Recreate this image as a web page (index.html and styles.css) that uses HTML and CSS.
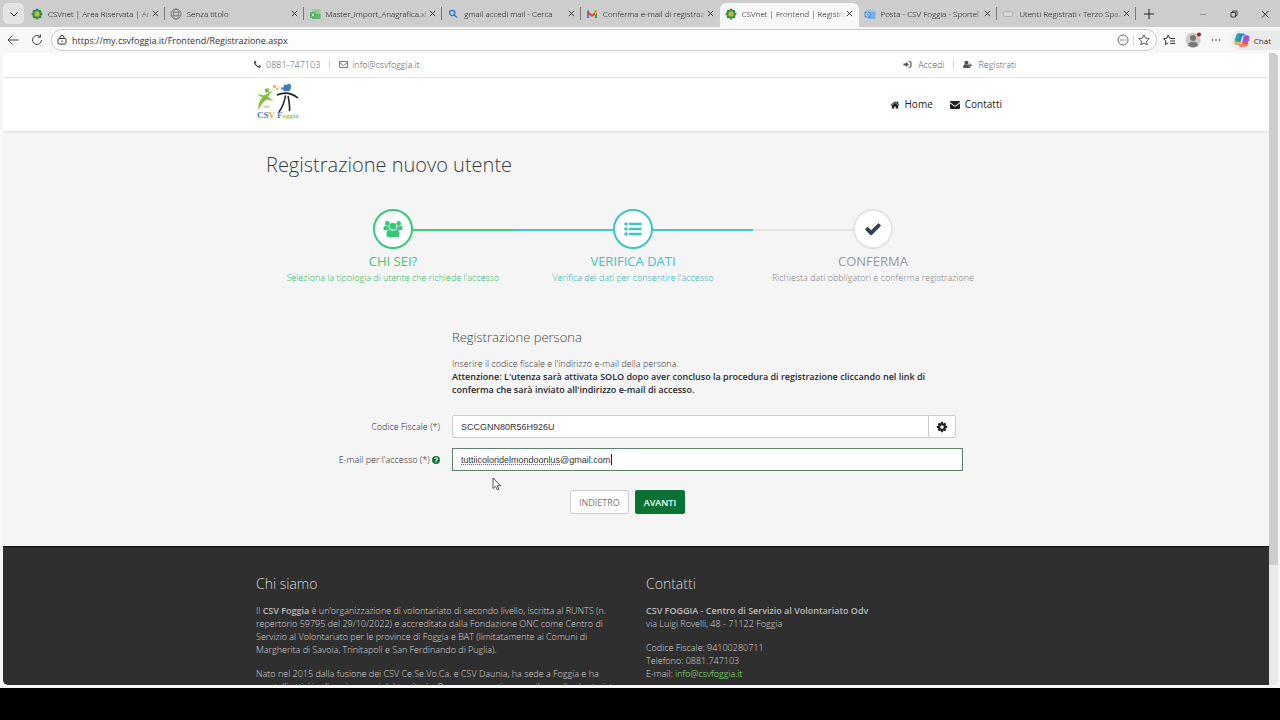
FILE: index.html
```html
<!DOCTYPE html>
<html lang="it">
<head>
<meta charset="utf-8">
<title>CSVnet | Frontend | Registrazione</title>
<link rel="stylesheet" href="styles.css">
</head>
<body>
<svg class="defs" aria-hidden="true">
  <symbol id="close" viewBox="0 0 8 8"><path d="M1 1l6 6M7 1l-6 6" fill="none" stroke="#222"/></symbol>
  <symbol id="flower" viewBox="0 0 12 12">
    <g fill="#2c8a43"><circle cx="6" cy="2" r="1.500"/><circle cx="8.800" cy="3.200" r="1.500"/><circle cx="10" cy="6" r="1.500"/><circle cx="8.800" cy="8.800" r="1.500"/><circle cx="6" cy="10" r="1.500"/><circle cx="3.200" cy="8.800" r="1.500"/><circle cx="2" cy="6" r="1.500"/><circle cx="3.200" cy="3.200" r="1.500"/><circle cx="6" cy="6" r="3.800"/></g>
    <circle cx="6" cy="6" r="2.700" fill="#a5c64a"/><circle cx="6" cy="6" r="1.500" fill="#e0a63c"/>
  </symbol>
</svg>
<div class="browser">
  <div class="tabstrip">
    <button class="tab-menu" aria-label="Menu schede"><svg width="10" height="10" viewBox="0 0 10 10"><path d="M1.500 3.500l3.500 3.500 3.500-3.500" fill="none" stroke="#222"/></svg></button>
    <div class="tabs">
      <div class="tab"><svg class="fav"><use href="#flower"/></svg><span class="tab-title">CSVnet | Area Riservata | Ana</span><button class="close" aria-label="Chiudi"><svg><use href="#close"/></svg></button></div>
      <div class="tab"><svg class="fav" viewBox="0 0 12 12"><g fill="none" stroke="#777" stroke-width=".9"><circle cx="6" cy="6" r="5"/><ellipse cx="6" cy="6" rx="2.300" ry="5"/><path d="M1.500 4.200h9M1.500 7.800h9"/></g></svg><span class="tab-title">Senza titolo</span><button class="close" aria-label="Chiudi"><svg><use href="#close"/></svg></button></div>
      <div class="tab"><svg class="fav" viewBox="0 0 12 12"><rect x="3" y="1" width="8.500" height="10" rx="1" fill="#8fd08f"/><path d="M3 6h8.500v4a1 1 0 0 1-1 1H4a1 1 0 0 1-1-1z" fill="#5fb56b"/><rect x="1" y="4" width="6" height="6" rx="1" fill="#57a866"/><path d="M2.700 5.500l2.600 3M5.300 5.500l-2.600 3" stroke="#e7f6e7" stroke-width=".8"/></svg><span class="tab-title">Master_Import_Anagrafica.xl</span><button class="close" aria-label="Chiudi"><svg><use href="#close"/></svg></button></div>
      <div class="tab"><svg class="fav" viewBox="0 0 12 12"><g fill="none" stroke="#2479c9" stroke-width="1.400"><circle cx="5.200" cy="5" r="2.600"/><path d="M7.200 7l2.600 2.600"/></g></svg><span class="tab-title">gmail accedi mail - Cerca</span><button class="close" aria-label="Chiudi"><svg><use href="#close"/></svg></button></div>
      <div class="tab no-sep"><svg class="fav" viewBox="0 0 12 12"><path d="M1 2.500h2.200V10H1z" fill="#4285f4"/><path d="M8.800 2.500H11V10H8.800z" fill="#34a853"/><path d="M1 2.500L6 6.500l5-4v2.600L6 9 1 5.100z" fill="#ea4335"/><path d="M8.800 4.200L11 2.500v2.600L8.800 6.800z" fill="#fbbc04"/></svg><span class="tab-title">Conferma e-mail di registraz</span><button class="close" aria-label="Chiudi"><svg><use href="#close"/></svg></button></div>
      <div class="tab active"><svg class="fav"><use href="#flower"/></svg><span class="tab-title">CSVnet | Frontend | Registraz</span><button class="close" aria-label="Chiudi"><svg><use href="#close"/></svg></button></div>
      <div class="tab"><svg class="fav" viewBox="0 0 12 12"><rect x="2.500" y="1.500" width="9" height="7" rx="1" fill="#9cc6ec"/><rect x="4" y="4" width="7.500" height="7" rx="1" fill="#78aee4"/><rect x=".5" y="3.500" width="6" height="6" rx="1" fill="#4c92d8"/><circle cx="3.500" cy="6.500" r="1.600" fill="none" stroke="#fff" stroke-width=".8"/></svg><span class="tab-title">Posta - CSV Foggia - Sportel</span><button class="close" aria-label="Chiudi"><svg><use href="#close"/></svg></button></div>
      <div class="tab"><svg class="fav" viewBox="0 0 12 12"><path d="M3.500 3.500h5a2.500 2.500 0 0 1 0 5h-5a2.500 2.500 0 0 1 0-5z" fill="#d6d6d6" stroke="#b9aaa2" stroke-width=".9"/></svg><span class="tab-title">Utenti Registrati ‹ Terzo Spaz</span><button class="close" aria-label="Chiudi"><svg><use href="#close"/></svg></button></div>
    </div>
    <div class="window-controls">
      <button aria-label="Nuova scheda"><svg width="12" height="12" viewBox="0 0 12 12"><path d="M6 1v10M1 6h10" stroke="#222"/></svg></button>
      <span class="spacer"></span>
      <button aria-label="Riduci"><svg width="10" height="10" viewBox="0 0 10 10"><path d="M2 5.500h6" stroke="#999"/></svg></button>
      <button aria-label="Ripristina"><svg width="10" height="10" viewBox="0 0 10 10"><path d="M2 3.500h4.500V8H2zM3.500 3.500V2H8v4.500H6.500" fill="none" stroke="#333" stroke-width=".9"/></svg></button>
      <button aria-label="Chiudi finestra"><svg width="10" height="10" viewBox="0 0 10 10"><path d="M2 2l6.500 6.500M8.500 2L2 8.500" stroke="#222" stroke-width=".9"/></svg></button>
    </div>
  </div>

  <div class="toolbar">
    <button class="go-back" aria-label="Indietro"><svg width="12" height="12" viewBox="0 0 12 12"><path d="M11.500 6H1M5.500 1.500L1 6l4.500 4.500" fill="none" stroke="#444"/></svg></button>
    <button aria-label="Aggiorna"><svg width="12" height="12" viewBox="0 0 12 12"><path d="M10.500 6A4.500 4.500 0 1 1 9 2.600M9.500 .5v2.700H6.800" fill="none" stroke="#444"/></svg></button>
    <div class="address">
      <svg width="10" height="10" viewBox="0 0 10 10"><rect x="1" y="3.500" width="8" height="5.500" rx="1.200" fill="none" stroke="#333"/><path d="M3 3.500V2.400a2 2 0 0 1 4 0v1.100" fill="none" stroke="#333"/><rect x="4.400" y="5.500" width="1.200" height="1.500" fill="#333"/></svg>
      <input type="text" aria-label="Indirizzo" value="https://my.csvfoggia.it/Frontend/Registrazione.aspx">
      <button aria-label="Altro"><svg width="12" height="12" viewBox="0 0 12 12"><circle cx="6" cy="6" r="5" fill="none" stroke="#555" stroke-width=".9"/><path d="M3.200 5.500h1.200v1H3.200zM5.400 5.500h1.200v1H5.400zM7.600 5.500h1.200v1H7.600z" fill="#444"/></svg></button>
      <span class="bar"></span>
      <button aria-label="Preferiti"><svg width="12" height="12" viewBox="0 0 12 12"><path d="M6 .9l1.600 3.300 3.600.5-2.600 2.500.6 3.600L6 9.100l-3.200 1.700.6-3.600L.8 4.700l3.600-.5z" fill="none" stroke="#444" stroke-width=".9"/></svg></button>
    </div>
    <button aria-label="Elenco preferiti"><svg width="12" height="12" viewBox="0 0 12 12"><path d="M7.500 4.200H6.700L5.200 1 3.700 4.200l-3.200.5L2.900 7l-.6 3.500 2.900-1.600M7.200 4.500H12M7.200 7H12M7.200 9.500H12" fill="none" stroke="#333"/></svg></button>
    <button aria-label="Profilo"><svg width="16" height="18" viewBox="0 0 16 18"><circle cx="8" cy="9" r="7.500" fill="#cfcbc8"/><circle cx="8" cy="7" r="3" fill="#777"/><path d="M3 14.500q0-3.800 5-3.800t5 3.800q-5 4-10 0z" fill="#777"/><circle cx="14" cy="3.500" r="2" fill="#b5122b"/></svg></button>
    <button aria-label="Impostazioni"><svg width="10" height="10" viewBox="0 0 10 10"><g fill="#333"><circle cx="1.500" cy="5" r=".8"/><circle cx="5" cy="5" r=".8"/><circle cx="8.500" cy="5" r=".8"/></g></svg></button>
    <button class="chat"><svg width="16" height="16" viewBox="0 0 16 16"><path d="M4.500 1.500h5q1.500 0 2 2H9.500Q8.500 3.500 8 5l-1.700 6q-.5 1.500-2 1.500H3Q0 12.500.8 9L2.300 3.500Q2.800 1.500 4.500 1.500z" fill="#2b83d8"/><path d="M2.300 3.500Q2.800 1.500 4.500 1.500h1L4.500 9.500.8 9z" fill="#27a8a0"/><path d="M.8 9l5.800 1-.3 1q-.5 1.500-2 1.500H3Q.2 12.500.8 9z" fill="#e9b52f"/><path d="M11.500 14.500h-5q-1.500 0-2-2H6.500Q7.500 12.500 8 11l1.700-6q.5-1.500 2-1.500H13q3 0 2.200 3.500l-1.500 5.500q-.5 2-2.200 2z" fill="#e6507c"/><path d="M9.700 5q.5-1.500 2-1.500H13q3 0 2.200 3.500l-.5 2-6-.5z" fill="#a553d6"/><path d="M11.500 14.500h-5q-1.500 0-2-2H6.500q.8 0 1.300-1l6 1q-.6 2-2.300 2z" fill="#f4814d"/></svg><span>Chat</span></button>
  </div>

  <div class="viewport">
    <div class="page">
      <div class="topbar">
        <div class="container split">
          <div class="contact-list">
            <span class="item"><svg class="fa" viewBox="0 0 1792 1792"><path d="M1600 1240q0 27-10 70.500t-21 68.500q-21 50-122 106-94 51-186 51-27 0-52.500-3.500t-57.500-12.500-47.500-14.500-55.500-20.500-49-18q-98-35-175-83-128-79-264.500-215.500t-215.500-264.500q-48-77-83-175-3-9-18-49t-20.500-55.500-14.500-47.500-12.500-57.500-3.500-52.500q0-92 51-186 56-101 106-122 25-11 68.500-21t70.500-10q14 0 21 3 18 6 53 76 11 19 30 54t35 63.500 31 53.500q3 4 17.500 25t21.500 35.500 7 28.500q0 20-28.500 50t-62 55-62 53-28.500 46q0 9 5 22.500t8.500 20.500 14 24 11.500 19q76 137 174 235t235 174q2 1 19 11.500t24 14 20.500 8.500 22.500 5q18 0 46-28.500t53-62 55-62 50-28.500q14 0 28.500 7t35.500 21.500 25 17.500q25 15 53.500 31t63.500 35 54 30q70 35 76 53 3 7 3 21z"/></svg>0881-747103</span>
            <span class="bar"></span>
            <a class="item" href="#"><svg class="fa" viewBox="0 0 10 10"><path d="M.6 1.600h8.800v6.900H.6zM.6 3l4.400 3.200L9.400 3" fill="none" stroke="currentColor" stroke-width=".9"/></svg>info@csvfoggia.it</a>
          </div>
          <div class="account">
            <a class="item" href="#"><svg class="fa" viewBox="0 0 10 10"><path d="M.5 3.800h2.700V2L6.500 5 3.200 8V6.200H.5z"/><path d="M6 1.500h2A1.500 1.500 0 0 1 9.500 3v4A1.500 1.500 0 0 1 8 8.500H6v-1h2.200V2.500H6z"/></svg>Accedi</a>
            <span class="bar"></span>
            <a class="item" href="#"><svg class="fa" viewBox="0 0 10 10"><circle cx="3.800" cy="3" r="2.300"/><path d="M.2 9q-.2-4 2-4.200 1.600 1.200 3.200 0 .9.100 1.200.8v1.800H8V9zM7.300 3.800h1.200v1.400H10v1.200H8.500v1.400H7.300V6.400H5.900V5.200h1.400z"/></svg>Registrati</a>
          </div>
        </div>
      </div>

      <header class="header">
        <div class="container split">
          <a class="logo" href="#" aria-label="CSV Foggia">
            <svg width="44" height="38" viewBox="0 0 44 38">
              <circle cx="11" cy="7.500" r="2.300" fill="#86bf3c"/>
              <path d="M1 10.500q6 3 9 1l7-4.500-5 6.500 5.500 4.500-6.500-1.500Q6 19 2.500 27q-1-7 4-13Q3 13.500 1 10.500z" fill="#86bf3c"/>
              <path d="M17 3l2-1 1 2-2 1zM20 6l1.500-1 1 1.500zM23 5l1.500-1" fill="#e5b24a" stroke="#e5b24a" stroke-width=".8"/>
              <path d="M28 1.500l3 .5 1-1.500 3 1.200v3l-1 3-6 .5-1-2-2 .5.500-2.500 2 .3z" fill="#3f7cc0"/>
              <path d="M21 12q11-5 21 3" fill="none" stroke="#222" stroke-width="1.600"/>
              <path d="M29.500 12.500Q28 22 23 29M32 13q2 9 1.500 15" fill="none" stroke="#222" stroke-width="1.600"/>
              <text class="logo-year" x="6" y="25">OdV</text>
              <text class="logo-big" x="1" y="35" fill="#4a7ec0">CS<tspan fill="#e0a53f">V</tspan> F<tspan class="logo-small" fill="#98bf55">oggia</tspan></text>
            </svg>
          </a>
          <nav class="nav">
            <a href="#"><svg class="fa" viewBox="0 0 1792 1792"><path d="M1472 992v480q0 26-19 45t-45 19h-384v-384h-256v384h-384q-26 0-45-19t-19-45v-480q0-1 .5-3t.5-3l575-474 575 474q1 2 1 6zm223-69l-62 74q-8 9-21 11h-3q-13 0-21-7l-692-577-692 577q-12 8-24 7-13-2-21-11l-62-74q-8-10-7-23.500t11-21.500l719-599q32-26 76-26t76 26l244 204v-195q0-14 9-23t23-9h192q14 0 23 9t9 23v408l219 182q10 8 11 21.500t-7 23.500z"/></svg>Home</a>
            <a href="#"><svg class="fa" viewBox="0 0 10 10"><path d="M0 2q0-1 1-1h8q1 0 1 1L6 5.200q-1 .7-2 0zM0 3.300L4 6.200q1 .6 2 0l4-2.900V8q0 1-1 1H1Q0 9 0 8z"/></svg>Contatti</a>
          </nav>
        </div>
      </header>

      <main class="main">
        <div class="container">
          <h1>Registrazione nuovo utente</h1>
          <ol class="steps">
            <li class="step done">
              <span class="circle"><svg width="20" height="20" viewBox="0 0 20 20" fill="currentColor"><circle cx="4.300" cy="4.500" r="2.400"/><circle cx="15.700" cy="4.500" r="2.400"/><path d="M.5 11Q0 6.800 2.500 6.800q1.800 1 3.500.3Q5.300 9.500 6.500 11zM19.500 11q.5-4.200-2-4.200-1.800 1-3.500.3.700 2.400-.5 3.900z"/><circle cx="10" cy="7.300" r="3.500"/><path d="M3.500 15.500Q3.500 11 6 10.600q4 2.500 8 0 2.500.4 2.500 4.900 0 2.700-2.200 2.700H5.700q-2.200 0-2.200-2.700z"/></svg></span>
              <strong>CHI SEI?</strong>
              <span class="desc">Seleziona la tipologia di utente che richiede l'accesso</span>
            </li>
            <li class="step current">
              <span class="circle"><svg width="20" height="20" viewBox="0 0 20 20" fill="currentColor"><circle cx="3" cy="5" r="1.800"/><circle cx="3" cy="10" r="1.800"/><circle cx="3" cy="15" r="1.800"/><rect x="6" y="3.800" width="12.500" height="2.400" rx=".4"/><rect x="6" y="8.800" width="12.500" height="2.400" rx=".4"/><rect x="6" y="13.800" width="12.500" height="2.400" rx=".4"/></svg></span>
              <strong>VERIFICA DATI</strong>
              <span class="desc">Verifica dei dati per consentire l'accesso</span>
            </li>
            <li class="step todo">
              <span class="circle"><svg width="18" height="18" viewBox="0 0 1792 1792" fill="#34424f"><path d="M1671 566q0 40-28 68l-724 724-136 136q-28 28-68 28t-68-28l-136-136-362-362q-28-28-28-68t28-68l136-136q28-28 68-28t68 28l294 295 656-657q28-28 68-28t68 28l136 136q28 28 28 68z"/></svg></span>
              <strong>CONFERMA</strong>
              <span class="desc">Richiesta dati obbligatori e conferma registrazione</span>
            </li>
          </ol>

          <form class="form">
            <div class="intro">
              <h2>Registrazione persona</h2>
              <p>Inserire il codice fiscale e l'indirizzo e-mail della persona.<br><b>Attenzione: L'utenza sarà attivata SOLO dopo aver concluso la procedura di registrazione cliccando nel link di conferma che sarà inviato all'indirizzo e-mail di accesso.</b></p>
            </div>
            <label for="cf">Codice Fiscale (*)</label>
            <div class="group">
              <input id="cf" type="text" value="SCCGNN80R56H926U">
              <button type="button" aria-label="Calcola"><svg width="12" height="12" viewBox="0 0 1792 1792" fill="#222"><path d="M1152 896q0-106-75-181t-181-75-181 75-75 181 75 181 181 75 181-75 75-181zm512-109v222q0 12-8 23t-20 13l-185 28q-19 54-39 91 35 50 107 138 10 12 10 25t-9 23q-27 37-99 108t-94 71q-12 0-26-9l-138-108q-44 23-91 38-16 136-29 186-7 28-36 28h-222q-14 0-24.500-8.500t-11.500-21.500l-28-184q-49-16-90-37l-141 107q-10 9-25 9-14 0-25-11-126-114-165-168-7-10-7-23 0-12 8-23 15-21 51-66.500t54-70.500q-27-50-41-99l-183-27q-13-2-21-12.500t-8-23.500v-222q0-12 8-23t19-13l186-28q14-46 39-92-40-57-107-138-10-12-10-24 0-10 9-23 26-36 98.500-107.500t94.500-71.500q13 0 26 10l138 107q44-23 91-38 16-136 29-186 7-28 36-28h222q14 0 24.500 8.500t11.500 21.500l28 184q49 16 90 37l142-107q9-9 24-9 13 0 25 10 129 119 165 170 7 8 7 22 0 12-8 23-15 21-51 66.500t-54 70.500q26 50 41 98l183 28q13 2 21 12.500t8 23.500z"/></svg></button>
            </div>
            <label for="email">E-mail per l'accesso (*) <svg width="8" height="8" viewBox="0 0 10 10"><circle cx="5" cy="5" r="4.900" fill="#0a7233"/><path d="M3.200 3.800Q3.300 2.200 5 2.200t1.800 1.500Q6.800 4.500 5.800 5 5 5.400 5 6.100M5 7v1.300" fill="none" stroke="#fff" stroke-width="1.300"/></svg></label>
            <div class="email-field">
              <input id="email" type="text" spellcheck="false" value="tuttiicoloridelmondoonlus@gmail.com">
              <span class="misspelling"></span><span class="caret"></span>
              <svg class="pointer" width="10" height="14" viewBox="0 0 10 14"><path d="M1 1v10.500l2.600-2.300L5.300 13l1.600-.8-1.600-3.500h3.500z" fill="#fff" stroke="#444" stroke-width=".9"/></svg>
            </div>
            <div class="actions">
              <button type="button" class="back">INDIETRO</button>
              <button type="button" class="next">AVANTI</button>
            </div>
          </form>
        </div>
      </main>

      <footer class="footer">
        <div class="container columns">
          <section>
            <h3>Chi siamo</h3>
            <p>Il <b>CSV Foggia</b> è un’organizzazione di volontariato di secondo livello, iscritta al RUNTS (n. repertorio 59795 del 29/10/2022) e accreditata dalla Fondazione ONC come Centro di Servizio al Volontariato per le province di Foggia e BAT (limitatamente ai Comuni di Margherita di Savoia, Trinitapoli e San Ferdinando di Puglia).</p>
            <p>Nato nel 2015 dalla fusione dei CSV Ce.Se.Vo.Ca. e CSV Daunia, ha sede a Foggia e ha sportelli attivi in diversi comuni del territorio. Promuove, sostiene e sviluppa il volontariato</p>
          </section>
          <section>
            <h3>Contatti</h3>
            <p><b>CSV FOGGIA - Centro di Servizio al Volontariato Odv</b><br>via Luigi Rovelli, 48 - 71122 Foggia</p>
            <p>Codice Fiscale: 94100280711<br>Telefono: 0881.747103<br>E-mail: <a href="#">info@csvfoggia.it</a></p>
          </section>
        </div>
      </footer>
    </div>
    <div class="scrollbar"><div class="thumb"></div></div>
  </div>
</div>
<div class="desktop-edge"></div>
</body>
</html>
```
FILE: styles.css
```css
* { box-sizing: border-box; }
body { margin: 0; height: 100vh; display: flex; flex-direction: column; overflow: hidden; background: #000; font: 9px/13px "Open Sans", "Noto Sans", sans-serif; color: #555; }
button { border: 0; background: none; padding: 0; font: inherit; display: flex; align-items: center; justify-content: center; }
a { color: inherit; text-decoration: none; }
h1, h2, h3, p, ol { margin: 0; padding: 0; font-weight: 300; }
b { font-weight: 600; }
.defs { display: none; }
.browser { flex: 1; min-height: 0; display: flex; flex-direction: column; background: #f7f7f7; }
.desktop-edge { height: 32px; flex: none; background: #000; }

/* tab strip */
.tabstrip { display: flex; height: 27px; flex: none; background: #cdcdcd; color: #000; font-size: 8px; font-weight: 300; }
.tab-menu { width: 21px; height: 21px; margin: 3px 2px 3px 3px; flex: none; border-radius: 5px; background: #e4e4e4; }
.tabs { flex: 1; min-width: 0; display: grid; grid-template-columns: repeat(8, minmax(0, 1fr)); }
.tab { display: flex; align-items: center; padding: 0 6px 0 5px; background: linear-gradient(#777, #777) right center / 1px 13px no-repeat; }
.no-sep { background: none; }
.tab.active { margin-top: 3px; padding-bottom: 3px; border-radius: 6px 6px 0 0; background: #f7f7f7; }
.fav { width: 12px; height: 12px; flex: none; }
.tab-title { flex: 1; min-width: 0; margin: 0 0 0 5px; overflow: hidden; white-space: nowrap; mask-image: linear-gradient(90deg, #000 calc(100% - 10px), transparent); }
.close svg { width: 7px; height: 7px; }
.window-controls { width: 144px; flex: none; display: flex; align-items: center; padding: 0 10px 0 7px; gap: 21px; }
.spacer { flex: 1; }

/* toolbar */
.toolbar { display: flex; align-items: center; height: 26px; flex: none; padding: 0 0 0 7px; gap: 10px; }
.go-back { margin-right: 2px; }
.address { flex: 1; height: 22px; display: flex; align-items: center; gap: 5px; margin: 0 -4px 0 -2px; padding: 0 6px 0 5px; border: 1px solid #ccc; border-radius: 11px; background: #fdfdfd; }
.address input { flex: 1; min-width: 0; border: 0; padding: 0; background: none; outline: 0; font: inherit; color: #333; }
.bar { width: 1px; height: 11px; background: #ddd; }
.address .bar { margin: 0 -1px; }
.chat { height: 20px; gap: 4px; padding: 0 9px 0 3px; border-radius: 10px 0 0 10px; background: #eaeaea; color: #333; font-size: 8px; }

/* viewport */
.viewport { flex: 1; min-height: 0; display: flex; margin: 0 2px 3px 3px; }
.page { flex: 1; min-width: 0; overflow: hidden; background: #f5f5f5; border-radius: 5px 0 0 5px; }
.scrollbar { width: 9px; background: #eaeaea; border-radius: 0 5px 5px 0; }
.thumb { height: 81%; background: #cdcdcd; border-radius: 0 5px 0 0; }
.container { width: 100%; max-width: 780px; margin: 0 auto; padding: 0 10px; }
.split { display: flex; align-items: center; justify-content: space-between; height: 100%; }
.fa { width: 9px; height: 9px; fill: currentColor; flex: none; }

.topbar { height: 25px; padding-bottom: 1px; background: #fff; border-bottom: 1px solid #e6e6e6; font-weight: 300; color: #4c565d; }
.contact-list, .account { display: flex; align-items: center; gap: 9px; }
.item { display: flex; align-items: center; gap: 4px; }
.contact-list { margin-left: -3px; }
.account .item { gap: 6px; }
.header { height: 53px; background: #fff; box-shadow: 0 1px 2px #ddd; }
.logo { display: flex; margin-bottom: 6px; }
.logo-year { font: 4px "Liberation Sans", sans-serif; fill: #999; }
.logo-big { font: bold 9px "Liberation Serif", serif; }
.logo-small { font-size: 7px; }
.nav { display: flex; gap: 17px; padding-right: 14px; font-size: 10px; color: #222; }
.nav a { display: flex; align-items: center; gap: 5px; }
.nav .fa { width: 10px; height: 10px; }

/* registration */
.main { padding: 20px 0 32px; }
h1 { padding-left: 10px; font-size: 20px; line-height: 28px; color: #333d45; }
.steps { display: grid; grid-template-columns: repeat(3, 1fr); margin: 30px 23px 0 17px; list-style: none; }
.step { display: flex; flex-direction: column; align-items: center; white-space: nowrap; background: linear-gradient(90deg, var(--before) 50%, var(--after) 50%) 0 20px / 100% 2px no-repeat; }
.done { color: #37c978; --before: transparent; --after: #43c97d; }
.current { color: #3fc3c3; --before: #46c6c6; --after: #46c6c6; }
.todo { color: #999; --before: #e2e2e2; --after: transparent; }
.circle { width: 40px; height: 40px; display: flex; align-items: center; justify-content: center; border: 2px solid currentColor; border-radius: 50%; background: #fff; }
.todo .circle { border-color: #e4e4e4; }
.step strong { margin-top: 3px; font-size: 13px; line-height: 18px; font-weight: 400; }
.desc { margin-top: 1px; }
.done .desc { color: #28b868; }
.current .desc { color: #2bb0b0; }
.todo .desc { color: #808080; }
.form { display: grid; grid-template-columns: 174px minmax(0, 511px); column-gap: 12px; row-gap: 10px; align-items: center; margin: 43px 0 0 10px; }
.intro { grid-column: 2; margin-bottom: 9px; }
.intro h2 { margin-bottom: 10px; font-size: 13px; line-height: 20px; color: #444; }
.intro p { max-width: 490px; color: #333; }
.intro b { color: #1f2931; }
.form label { text-align: right; font-weight: 300; color: #222; }
.form label svg { vertical-align: -1px; }
.form input { width: 100%; height: 23px; padding: 0 8px; border: 1px solid #ccc; border-radius: 2px; outline: 0; background: #fff; font: 9px "Liberation Sans", Arial, sans-serif; color: #333; }
.group { display: flex; margin-right: 7px; }
.group input { border-radius: 2px 0 0 2px; }
.group button { width: 27px; flex: none; border: 1px solid #ccc; border-left: 0; border-radius: 0 2px 2px 0; background: #fff; }
.email-field { position: relative; }
.email-field input { border-color: #5d8068; border-radius: 0; }
.misspelling { position: absolute; left: 9px; top: 16px; width: 99px; border-bottom: 1px dotted #e0303a; }
.caret { position: absolute; left: 159px; top: 6px; width: 1px; height: 11px; background: #222; }
.pointer { position: absolute; left: 40px; top: 29px; }
.actions { grid-column: 1 / -1; display: flex; justify-content: center; gap: 6px; margin: 9px 0 0 26px; }
.actions button { height: 24px; padding: 0 8px; border: 1px solid #ccc; border-radius: 2px; background: #fff; color: #777; }
.actions .next { border-color: #0a7233; background: #0a7233; color: #fff; font-weight: 600; }

/* footer */
.footer { min-height: 140px; padding: 27px 0; border-top: 1px solid #111; background: #2f2f2f; color: #d6d6d6; }
.columns { display: grid; grid-template-columns: 1fr 1fr; column-gap: 20px; }
.footer h3 { margin-bottom: 10px; font-size: 14px; line-height: 20px; }
.footer p { margin-bottom: 11px; }
.footer b { color: #bbb; }
.footer a { color: #83ee76; }
```
